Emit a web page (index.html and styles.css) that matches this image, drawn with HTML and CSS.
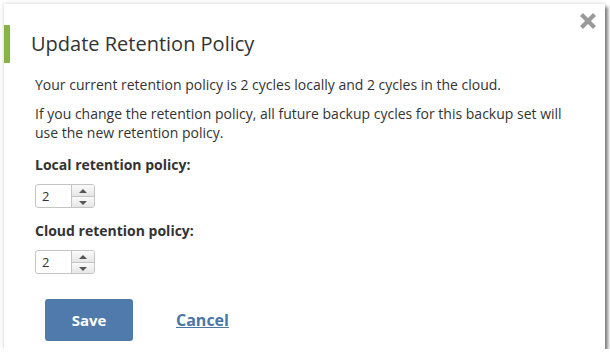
FILE: index.html
```html
<!DOCTYPE html>
<html lang="en">
<head>
    <meta charset="UTF-8">
    <meta name="viewport" content="width=device-width, initial-scale=1.0">
    <title>Update Retention Policy</title>
    <link rel="stylesheet" href="styles.css">
</head>
<body>

    <div class="dialog">
        <svg class="close-button" width="18" height="18" viewBox="0 0 18 18">
            <path d="M2.5 2.5 L15.5 15.5 M15.5 2.5 L2.5 15.5" stroke="#9a9a9a" stroke-width="4.2" stroke-linecap="butt"/>
        </svg>

        <h1 class="dialog-title">Update Retention Policy</h1>

        <div class="dialog-body">
            <p>Your current retention policy is 2 cycles locally and 2 cycles in the cloud.</p>
            <p>If you change the retention policy, all future backup cycles for this backup set will use the new retention policy.</p>

            <label class="field-label">Local retention policy:</label>
            <div class="spinner">
                <span class="spinner-value">2</span>
                <div class="spinner-buttons">
                    <span class="spinner-up"></span>
                    <span class="spinner-down"></span>
                </div>
            </div>

            <label class="field-label">Cloud retention policy:</label>
            <div class="spinner">
                <span class="spinner-value">2</span>
                <div class="spinner-buttons">
                    <span class="spinner-up"></span>
                    <span class="spinner-down"></span>
                </div>
            </div>

            <div class="actions">
                <button class="save-button">Save</button>
                <a class="cancel-link" href="#">Cancel</a>
            </div>
        </div>
    </div>

</body>
</html>
```

FILE: styles.css
```css
body {
    margin: 0;
    background: #ffffff;
    font-family: "Open Sans", sans-serif;
    color: #333333;
}

.dialog {
    position: relative;
    box-sizing: border-box;
    margin: 4px 0 0 4px;
    width: 601px;
    height: 345px;
    background: #ffffff;
    box-shadow: 0 0 4px rgba(0, 0, 0, 0.2), 3px 3px 3px rgba(0, 0, 0, 0.45);
    padding-top: 21px;
}

.close-button {
    position: absolute;
    top: 8px;
    right: 8px;
}

.dialog-title {
    margin: 0;
    height: 38px;
    line-height: 38px;
    border-left: 6px solid #86b543;
    padding-left: 21px;
    font-size: 20px;
    font-weight: normal;
    color: #333333;
}

.dialog-body {
    padding: 12px 31px 0;
    font-size: 14px;
    line-height: 19px;
}

.dialog-body p {
    margin: 0 0 10px;
}

.field-label {
    display: block;
    margin-top: 13px;
    font-weight: bold;
}

.spinner {
    display: inline-flex;
    margin-top: 10px;
    height: 24px;
    box-sizing: border-box;
    border: 1px solid #c4c4c4;
    border-radius: 3px;
    background: #ffffff;
}

.spinner-value {
    width: 35px;
    padding-left: 6px;
    box-sizing: border-box;
    line-height: 22px;
    font-size: 13px;
}

.spinner-buttons {
    display: flex;
    flex-direction: column;
    width: 22px;
    border-left: 1px solid #c4c4c4;
}

.spinner-up,
.spinner-down {
    position: relative;
    flex: 1;
    background: linear-gradient(#fafafa, #e6e6e6);
}

.spinner-up {
    border-bottom: 1px solid #c4c4c4;
    border-top-right-radius: 2px;
}

.spinner-down {
    border-bottom-right-radius: 2px;
}

.spinner-up::after,
.spinner-down::after {
    content: "";
    position: absolute;
    left: 7px;
    top: 4px;
    border-left: 4px solid transparent;
    border-right: 4px solid transparent;
}

.spinner-up::after {
    border-bottom: 4px solid #555555;
}

.spinner-down::after {
    border-top: 4px solid #555555;
}

.actions {
    display: flex;
    align-items: center;
    margin-top: 25px;
    padding-left: 10px;
}

.save-button {
    width: 88px;
    height: 42px;
    border: none;
    border-radius: 3px;
    background: #4f7aab;
    color: #ffffff;
    font-family: "Open Sans", sans-serif;
    font-size: 15px;
    font-weight: bold;
}

.cancel-link {
    margin-left: 43px;
    color: #4a76a8;
    font-size: 16px;
    font-weight: bold;
}
```
